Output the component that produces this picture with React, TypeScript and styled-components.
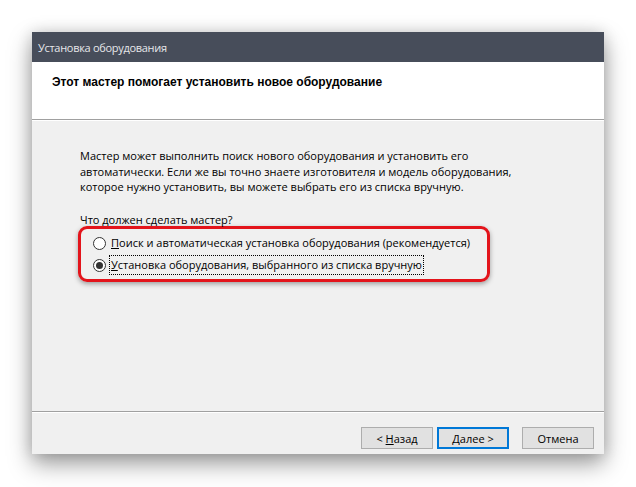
import React from "react";
import styled, { createGlobalStyle } from "styled-components";

const Global = createGlobalStyle`
  html, body { margin: 0; padding: 0; background: #ffffff; }
  body { width: 636px; height: 487px; overflow: hidden; }
  * { box-sizing: border-box; }
`;

const Page = styled.div`
  padding: 32px 32px 0 32px;
`;

const Window = styled.div`
  width: 572px;
  height: 422px;
  display: flex;
  flex-direction: column;
  background: #f0f0f0;
  box-shadow: 0 10px 22px rgba(0, 0, 0, 0.38), 0 0 14px rgba(0, 0, 0, 0.14);
  font-family: "Open Sans", "Noto Sans", sans-serif;
  color: #000;
`;

const TitleBar = styled.div`
  height: 30px;
  flex: none;
  background: #474d5a;
  color: #e6e7ea;
  font-size: 11px;
  letter-spacing: -0.3px;
  display: flex;
  align-items: center;
  padding-left: 6px;
`;

const Header = styled.div`
  height: 58px;
  flex: none;
  background: #ffffff;
  padding: 13px 0 0 20px;
  font-family: "Liberation Sans", Arial, sans-serif;
  font-weight: bold;
  font-size: 12px;
  border-bottom: 1px solid #a0a0a0;
`;

const Rule = styled.div`
  height: 1px;
  flex: none;
  background: #ffffff;
`;

const Body = styled.div`
  flex: 1;
  padding: 27px 40px 0 48px;
  font-size: 11px;
  line-height: 15.5px;
  border-bottom: 1px solid #a0a0a0;
`;

const Intro = styled.p`
  margin: 0 0 17px 0;
`;

const Question = styled.div`
  margin: 0 0 -1px 0;
`;

const Highlight = styled.div`
  width: 412px;
  margin-left: -2px;
  padding: 5px 0 5px 12px;
  border: 3px solid #e3141b;
  border-radius: 9px;
  box-shadow: 0 2px 5px rgba(0, 0, 0, 0.35);
  display: flex;
  flex-direction: column;
  gap: 4px;
`;

const Option = styled.label`
  display: flex;
  align-items: center;
  gap: 4px;
  height: 18px;
  white-space: nowrap;
`;

const Radio = styled.span<{ $checked?: boolean }>`
  width: 13px;
  height: 13px;
  border-radius: 50%;
  border: 1px solid #333;
  background: #fff;
  display: flex;
  align-items: center;
  justify-content: center;
  flex: none;
  &::after {
    content: "";
    width: 7px;
    height: 7px;
    border-radius: 50%;
    background: ${(p) => (p.$checked ? "#333" : "transparent")};
  }
`;

const OptionText = styled.span<{ $focus?: boolean }>`
  padding: 1px 1px;
  outline: ${(p) => (p.$focus ? "1px dotted #000" : "none")};
`;

const Key = styled.span`
  text-decoration: underline;
`;

const Footer = styled.div`
  height: 42px;
  flex: none;
  border-top: 1px solid #ffffff;
  display: flex;
  justify-content: flex-end;
  align-items: flex-start;
  padding: 14px 10px 0 0;
`;

const Button = styled.button<{ $default?: boolean; $gap?: number }>`
  width: 72px;
  height: 22px;
  margin-left: ${(p) => p.$gap ?? 0}px;
  background: #e1e1e1;
  border: ${(p) => (p.$default ? "2px solid #0078d7" : "1px solid #adadad")};
  font-family: "Open Sans", "Noto Sans", sans-serif;
  font-size: 11px;
  color: #000;
  padding: 0;
  display: flex;
  align-items: center;
  justify-content: center;
`;

export default function App() {
  return (
    <>
      <Global />
      <Page>
        <Window>
          <TitleBar>Установка оборудования</TitleBar>
          <Header>Этот мастер помогает установить новое оборудование</Header>
          <Rule />
          <Body>
            <Intro>
              Мастер может выполнить поиск нового оборудования и установить его
              <br />
              автоматически. Если же вы точно знаете изготовителя и модель оборудования,
              <br />
              которое нужно установить, вы можете выбрать его из списка вручную.
            </Intro>
            <Question>Что должен сделать мастер?</Question>
            <Highlight>
              <Option>
                <Radio />
                <OptionText>
                  <Key>П</Key>оиск и автоматическая установка оборудования (рекомендуется)
                </OptionText>
              </Option>
              <Option>
                <Radio $checked />
                <OptionText $focus>
                  <Key>У</Key>становка оборудования, выбранного из списка вручную
                </OptionText>
              </Option>
            </Highlight>
          </Body>
          <Footer>
            <Button>
              &lt;&nbsp;<Key>Н</Key>азад
            </Button>
            <Button $default $gap={4}>
              <Key>Д</Key>алее &gt;
            </Button>
            <Button $gap={13}>Отмена</Button>
          </Footer>
        </Window>
      </Page>
    </>
  );
}
